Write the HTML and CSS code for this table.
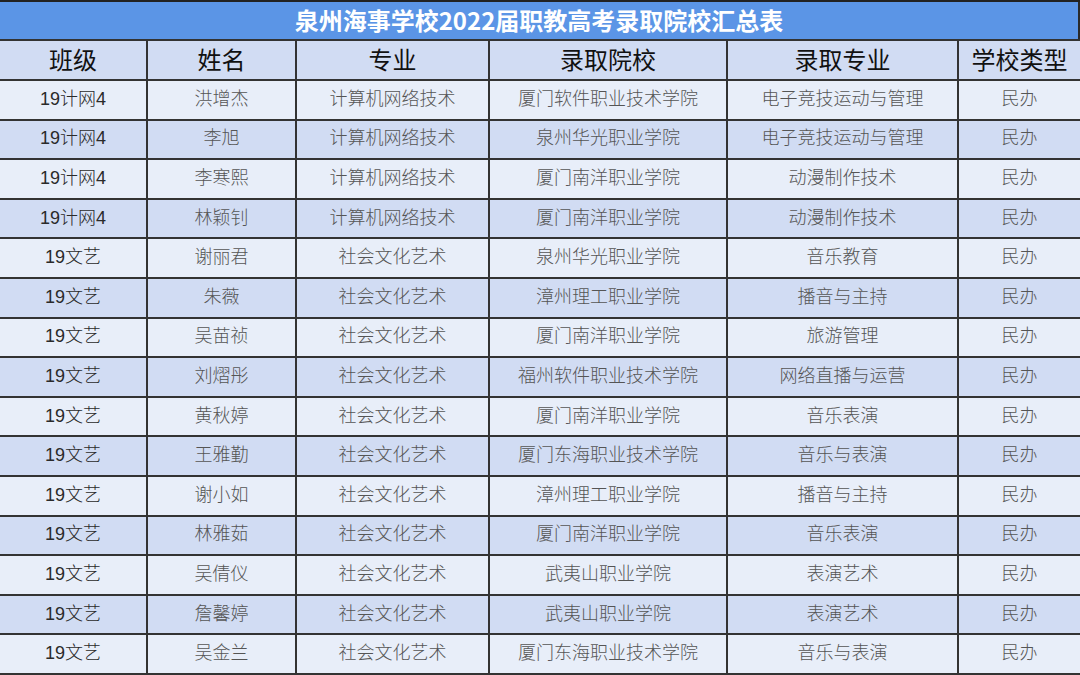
FILE: index.html
```html
<!DOCTYPE html>
<html lang="zh-CN">
<head>
<meta charset="utf-8">
<title>泉州海事学校2022届职教高考录取院校汇总表</title>
<link rel="stylesheet" href="styles.css">
</head>
<body>
<div class="sheet">
  <div class="title">泉州海事学校2022届职教高考录取院校汇总表</div>
  <div class="th">班级</div><div class="th">姓名</div><div class="th">专业</div><div class="th">录取院校</div><div class="th">录取专业</div><div class="th">学校类型</div>

  <div class="td cls light">19计网4</div><div class="td light">洪增杰</div><div class="td light">计算机网络技术</div><div class="td light">厦门软件职业技术学院</div><div class="td light">电子竞技运动与管理</div><div class="td light">民办</div>
  <div class="td cls dark">19计网4</div><div class="td dark">李旭</div><div class="td dark">计算机网络技术</div><div class="td dark">泉州华光职业学院</div><div class="td dark">电子竞技运动与管理</div><div class="td dark">民办</div>
  <div class="td cls light">19计网4</div><div class="td light">李寒熙</div><div class="td light">计算机网络技术</div><div class="td light">厦门南洋职业学院</div><div class="td light">动漫制作技术</div><div class="td light">民办</div>
  <div class="td cls dark">19计网4</div><div class="td dark">林颖钊</div><div class="td dark">计算机网络技术</div><div class="td dark">厦门南洋职业学院</div><div class="td dark">动漫制作技术</div><div class="td dark">民办</div>
  <div class="td cls light">19文艺</div><div class="td light">谢丽君</div><div class="td light">社会文化艺术</div><div class="td light">泉州华光职业学院</div><div class="td light">音乐教育</div><div class="td light">民办</div>
  <div class="td cls dark">19文艺</div><div class="td dark">朱薇</div><div class="td dark">社会文化艺术</div><div class="td dark">漳州理工职业学院</div><div class="td dark">播音与主持</div><div class="td dark">民办</div>
  <div class="td cls light">19文艺</div><div class="td light">吴苗祯</div><div class="td light">社会文化艺术</div><div class="td light">厦门南洋职业学院</div><div class="td light">旅游管理</div><div class="td light">民办</div>
  <div class="td cls dark">19文艺</div><div class="td dark">刘熠彤</div><div class="td dark">社会文化艺术</div><div class="td dark">福州软件职业技术学院</div><div class="td dark">网络直播与运营</div><div class="td dark">民办</div>
  <div class="td cls light">19文艺</div><div class="td light">黄秋婷</div><div class="td light">社会文化艺术</div><div class="td light">厦门南洋职业学院</div><div class="td light">音乐表演</div><div class="td light">民办</div>
  <div class="td cls dark">19文艺</div><div class="td dark">王雅勤</div><div class="td dark">社会文化艺术</div><div class="td dark">厦门东海职业技术学院</div><div class="td dark">音乐与表演</div><div class="td dark">民办</div>
  <div class="td cls light">19文艺</div><div class="td light">谢小如</div><div class="td light">社会文化艺术</div><div class="td light">漳州理工职业学院</div><div class="td light">播音与主持</div><div class="td light">民办</div>
  <div class="td cls dark">19文艺</div><div class="td dark">林雅茹</div><div class="td dark">社会文化艺术</div><div class="td dark">厦门南洋职业学院</div><div class="td dark">音乐表演</div><div class="td dark">民办</div>
  <div class="td cls light">19文艺</div><div class="td light">吴倩仪</div><div class="td light">社会文化艺术</div><div class="td light">武夷山职业学院</div><div class="td light">表演艺术</div><div class="td light">民办</div>
  <div class="td cls dark">19文艺</div><div class="td dark">詹馨婷</div><div class="td dark">社会文化艺术</div><div class="td dark">武夷山职业学院</div><div class="td dark">表演艺术</div><div class="td dark">民办</div>
  <div class="td cls light">19文艺</div><div class="td light">吴金兰</div><div class="td light">社会文化艺术</div><div class="td light">厦门东海职业技术学院</div><div class="td light">音乐与表演</div><div class="td light">民办</div>
</div>
</body>
</html>
```

FILE: styles.css
```css
html, body {
  margin: 0;
  padding: 0;
  background: #e8eef9;
}

.sheet {
  width: 1080px;
  height: 676px;
  display: grid;
  grid-template-columns: 146px 147px 191px 236px 229px 121px;
  grid-template-rows: 37px 38px repeat(15, 37.6px);
  column-gap: 2px;
  row-gap: 2px;
  background: #333333;
  border-top: 2px solid #222222;
  box-sizing: border-box;
  font-family: "Noto Sans CJK SC", "Liberation Sans", sans-serif;
  overflow: hidden;
}

.title {
  grid-column: 1 / -1;
  background: #5b95e6;
  color: #ffffff;
  font-weight: 700;
  font-size: 24px;
  display: flex;
  align-items: center;
  justify-content: center;
  padding-bottom: 3px;
  box-sizing: border-box;
  border-right: 2px solid #2a2a2a;
}

.th {
  background: #d1dcf3;
  color: #111111;
  font-size: 24px;
  display: flex;
  align-items: center;
  justify-content: center;
  padding-bottom: 4px;
  box-sizing: border-box;
}

.td {
  display: flex;
  align-items: center;
  justify-content: center;
  font-size: 18px;
  color: #555555;
  font-weight: 300;
  padding-bottom: 6px;
  box-sizing: border-box;
}

.cls {
  color: #2a2a2a;
  font-family: "Liberation Sans", "Noto Sans CJK SC", sans-serif;
  font-weight: 300;
}

.light {
  background: #e8eef9;
}

.dark {
  background: #d1dcf3;
}
```
